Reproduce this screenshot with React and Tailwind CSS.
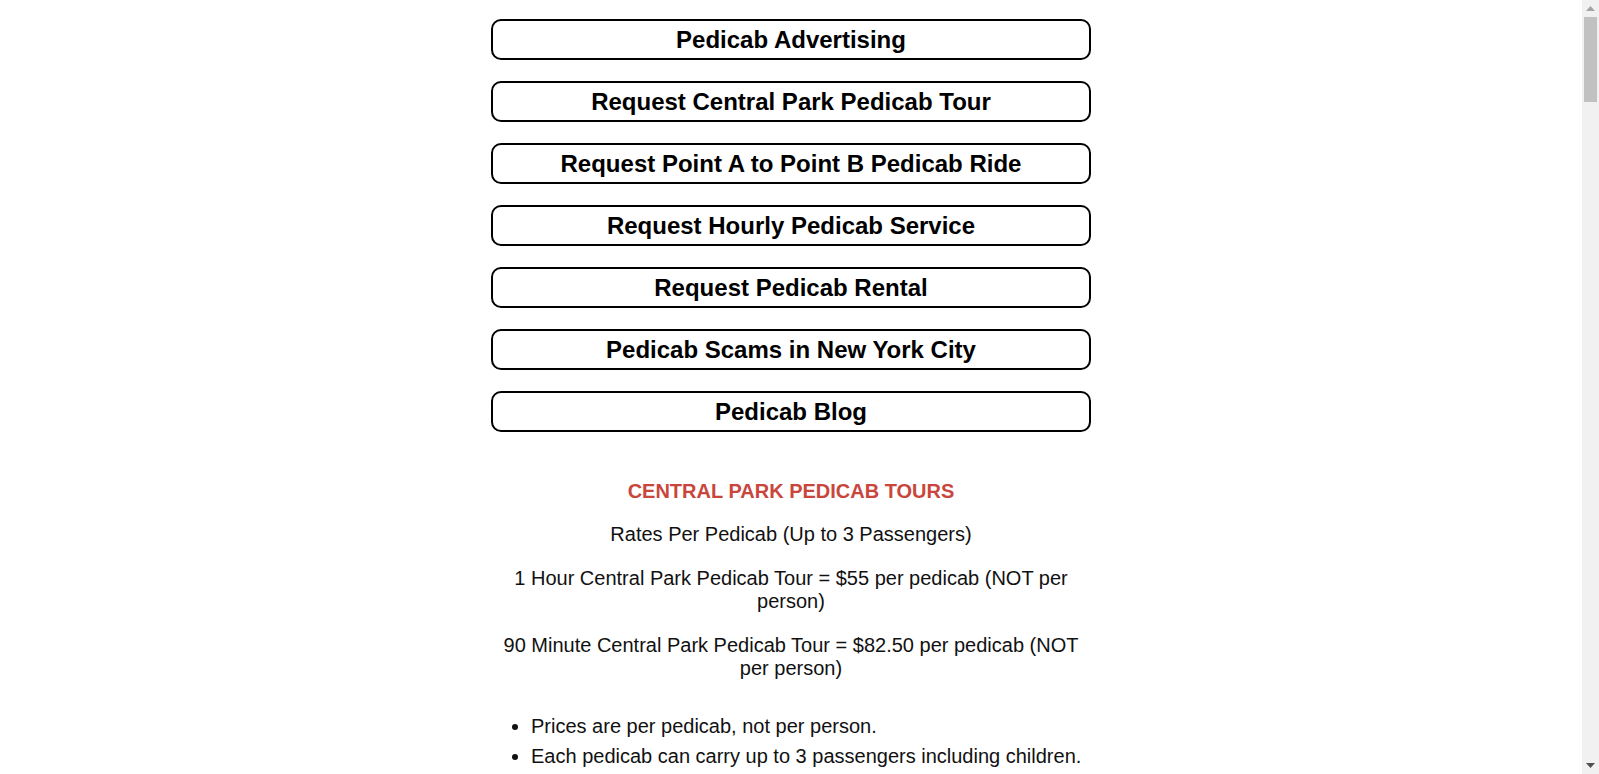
const LINKS = [
  'Pedicab Advertising',
  'Request Central Park Pedicab Tour',
  'Request Point A to Point B Pedicab Ride',
  'Request Hourly Pedicab Service',
  'Request Pedicab Rental',
  'Pedicab Scams in New York City',
  'Pedicab Blog',
];

const NOTES = [
  'Prices are per pedicab, not per person.',
  'Each pedicab can carry up to 3 passengers including children.',
];

function Scrollbar() {
  return (
    <aside className="w-[17px] shrink-0 h-screen bg-[#f1f1f1] flex flex-col items-center">
      <div className="h-[17px] flex items-center justify-center">
        <svg width="9" height="5" viewBox="0 0 9 5">
          <path d="M0 5 L4.5 0 L9 5 Z" fill="#a3a3a3" />
        </svg>
      </div>
      <div className="w-[13px] h-[85px] bg-[#c1c1c1]" />
      <div className="flex-1" />
      <div className="h-[17px] flex items-center justify-center">
        <svg width="9" height="5" viewBox="0 0 9 5">
          <path d="M0 0 L9 0 L4.5 5 Z" fill="#505050" />
        </svg>
      </div>
    </aside>
  );
}

export default function App() {
  return (
    <div className="h-screen flex bg-white text-[#111] font-['Liberation_Sans',Arial,sans-serif]">
      <main className="flex-1 h-screen overflow-hidden">
        <div className="w-[600px] mx-auto pt-[19px]">
          <nav className="flex flex-col gap-[21px]">
            {LINKS.map((label) => (
              <a
                key={label}
                href="#"
                className="h-[41px] flex items-center justify-center border-2 border-black rounded-[10px] text-[24px] font-bold text-black"
              >
                {label}
              </a>
            ))}
          </nav>

          <div className="mt-[48px] px-[10px] text-center text-[20px] leading-[23px]">
            <h2 className="text-[20px] font-bold text-[#c9463d] leading-[23px] mb-[20px]">
              CENTRAL PARK PEDICAB TOURS
            </h2>
            <p className="mb-[21px]">Rates Per Pedicab (Up to 3 Passengers)</p>
            <p className="mb-[21px]">1 Hour Central Park Pedicab Tour = $55 per pedicab (NOT per person)</p>
            <p className="mb-[20px]">90 Minute Central Park Pedicab Tour = $82.50 per pedicab (NOT per person)</p>
          </div>

          <ul className="mt-[35px] pl-[40px] list-disc text-[20px] leading-[23px]">
            {NOTES.map((note) => (
              <li key={note} className="mb-[7px]">{note}</li>
            ))}
          </ul>
        </div>
      </main>
      <Scrollbar />
    </div>
  );
}
